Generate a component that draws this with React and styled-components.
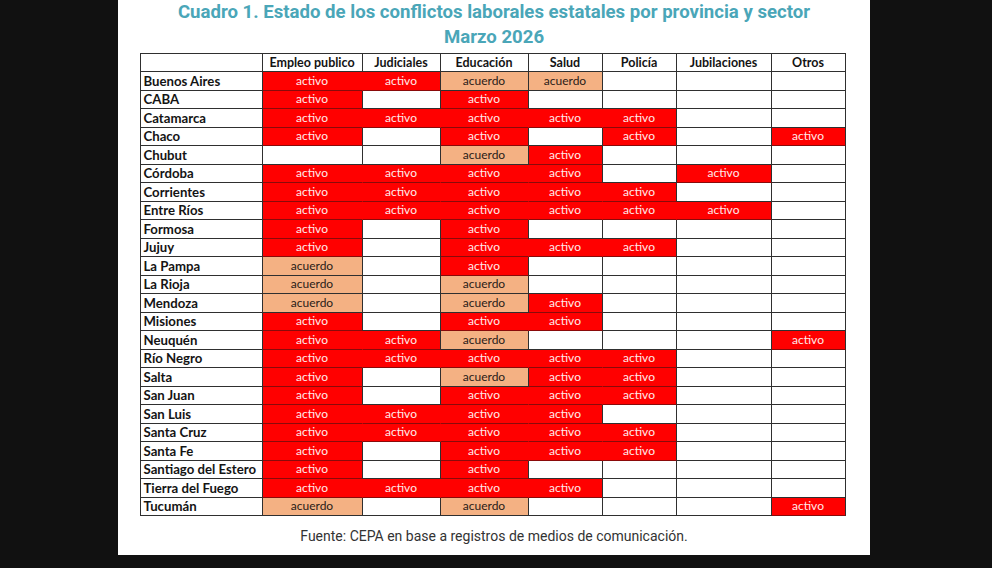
import styled, { createGlobalStyle } from 'styled-components';

const GlobalStyle = createGlobalStyle`
  html, body {
    margin: 0;
    padding: 0;
    background: #111111;
  }
`;

const colors = {
  red: '#ff0000',
  peach: '#f4b183',
  line: '#2f2f2f',
  title: '#4aa6b8',
  text: '#141414',
};

const SECTORS = [
  { label: 'Empleo publico', width: 100 },
  { label: 'Judiciales', width: 78 },
  { label: 'Educación', width: 88 },
  { label: 'Salud', width: 74 },
  { label: 'Policía', width: 74 },
  { label: 'Jubilaciones', width: 95 },
  { label: 'Otros', width: 74 },
];

// A = activo, C = acuerdo, . = vacío
const ROWS = [
  ['Buenos Aires', 'AACC...'],
  ['CABA', 'A.A....'],
  ['Catamarca', 'AAAAA..'],
  ['Chaco', 'A.A.A.A'],
  ['Chubut', '..CA...'],
  ['Córdoba', 'AAAA.A.'],
  ['Corrientes', 'AAAAA..'],
  ['Entre Ríos', 'AAAAAA.'],
  ['Formosa', 'A.A....'],
  ['Jujuy', 'A.AAA..'],
  ['La Pampa', 'C.A....'],
  ['La Rioja', 'C.C....'],
  ['Mendoza', 'C.CA...'],
  ['Misiones', 'A.AA...'],
  ['Neuquén', 'AAC...A'],
  ['Río Negro', 'AAAAA..'],
  ['Salta', 'A.CAA..'],
  ['San Juan', 'A.AAA..'],
  ['San Luis', 'AAAA...'],
  ['Santa Cruz', 'AAAAA..'],
  ['Santa Fe', 'A.AAA..'],
  ['Santiago del Estero', 'A.A....'],
  ['Tierra del Fuego', 'AAAA...'],
  ['Tucumán', 'C.C...A'],
];

const Page = styled.div`
  padding-left: 118px;
`;

const Card = styled.section`
  width: 752px;
  height: 555px;
  background: #ffffff;
  display: flex;
  flex-direction: column;
  align-items: center;
  box-sizing: border-box;
`;

const Title = styled.h1`
  margin: 0;
  font-family: Roboto, 'Liberation Sans', sans-serif;
  font-weight: 700;
  font-size: 18.6px;
  line-height: 25px;
  color: ${colors.title};
  text-align: center;
`;

const Table = styled.table`
  margin-top: 3px;
  margin-left: -3px;
  border-collapse: separate;
  border-spacing: 0;
  border-top: 1px solid ${colors.line};
  border-left: 1px solid ${colors.line};
  font-family: Lato, 'Open Sans', sans-serif;
  table-layout: fixed;
`;

const HeadCell = styled.th`
  height: 18px;
  padding: 0;
  font-size: 12.5px;
  font-weight: 700;
  color: ${colors.text};
  text-align: center;
  border-right: 1px solid ${colors.line};
  border-bottom: 1px solid ${colors.line};
  box-sizing: border-box;
`;

const RowLabel = styled.th`
  height: 18.5px;
  padding: 0 0 0 3px;
  font-size: 13.2px;
  font-weight: 700;
  color: ${colors.text};
  text-align: left;
  white-space: nowrap;
  border-right: 1px solid ${colors.line};
  border-bottom: 1px solid ${colors.line};
  box-sizing: border-box;
`;

const StatusCell = styled.td`
  height: 18.5px;
  padding: 0;
  font-size: 12px;
  line-height: 1;
  text-align: center;
  box-sizing: border-box;
  background: ${(p) => (p.$status === 'A' ? colors.red : p.$status === 'C' ? colors.peach : '#ffffff')};
  color: ${(p) => (p.$status === 'A' ? '#ffeaea' : '#2a2018')};
  border-bottom: 1px solid ${(p) => (p.$status === 'A' ? '#8a0a0a' : colors.line)};
  border-right: 1px solid ${(p) => (p.$joinRight ? colors.red : colors.line)};
`;

const Source = styled.p`
  margin: 12px 0 0;
  font-family: Roboto, 'Liberation Sans', sans-serif;
  font-size: 14px;
  color: #333333;
`;

const LABEL_TEXT = { A: 'activo', C: 'acuerdo' };

export default function App() {
  return (
    <Page>
      <GlobalStyle />
      <Card>
        <Title>
          Cuadro 1. Estado de los conflictos laborales estatales por provincia y sector
          <br />
          Marzo 2026
        </Title>
        <Table>
          <colgroup>
            <col style={{ width: 122 }} />
            {SECTORS.map((s) => (
              <col key={s.label} style={{ width: s.width }} />
            ))}
          </colgroup>
          <thead>
            <tr>
              <HeadCell />
              {SECTORS.map((s) => (
                <HeadCell key={s.label}>{s.label}</HeadCell>
              ))}
            </tr>
          </thead>
          <tbody>
            {ROWS.map(([name, code]) => (
              <tr key={name}>
                <RowLabel scope="row">{name}</RowLabel>
                {code.split('').map((st, i) => (
                  <StatusCell key={i} $status={st} $joinRight={st === 'A' && code[i + 1] === 'A'}>
                    {LABEL_TEXT[st] || ''}
                  </StatusCell>
                ))}
              </tr>
            ))}
          </tbody>
        </Table>
        <Source>Fuente: CEPA en base a registros de medios de comunicación.</Source>
      </Card>
    </Page>
  );
}
